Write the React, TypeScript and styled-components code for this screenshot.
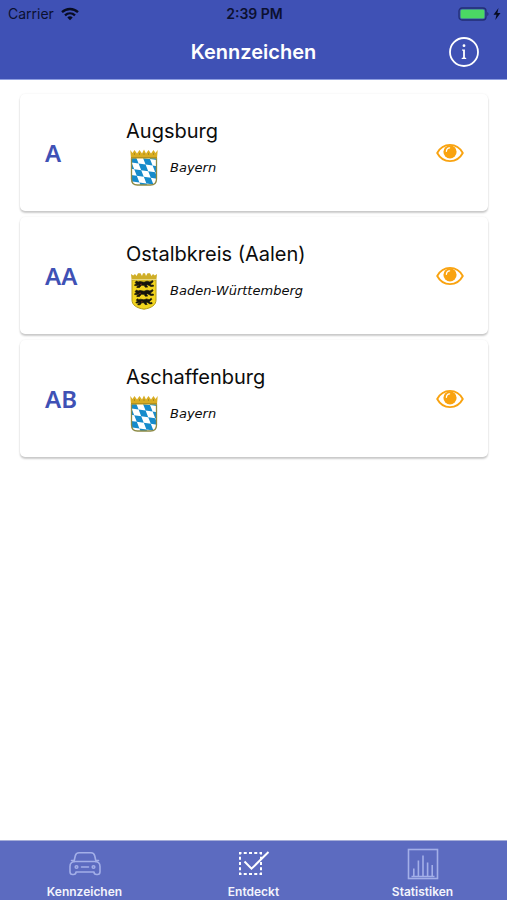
import React from "react";
import styled, { createGlobalStyle } from "styled-components";

const GlobalStyle = createGlobalStyle`
  * { box-sizing: border-box; }
  body {
    margin: 0;
    background: #fff;
    color: #0c0c0c;
    font-family: Inter, "Liberation Sans", sans-serif;
  }
  button { font: inherit; color: inherit; border: 0; padding: 0; background: none; cursor: pointer; }
`;

const Screen = styled.div`
  min-height: 100vh;
  display: flex;
  flex-direction: column;
`;

const Header = styled.header`
  background: #3f51b5;
  border-bottom: 1px solid #8f9ee0;
`;

const StatusBar = styled.div`
  display: grid;
  grid-template-columns: 1fr auto 1fr;
  align-items: center;
  height: 27px;
  padding: 0 6px 0 8px;
  color: #0b1030;
  font-size: 14px;
`;

const StatusGroup = styled.div<{ $end?: boolean }>`
  display: flex;
  align-items: center;
  gap: ${(p) => (p.$end ? 4 : 7)}px;
  justify-content: ${(p) => (p.$end ? "flex-end" : "flex-start")};
`;

const Clock = styled.time`
  font-weight: 600;
`;

const NavBar = styled.div`
  display: grid;
  grid-template-columns: 1fr auto 1fr;
  align-items: center;
  height: 52px;
  padding: 0 28px 2px;
  color: #fff;
`;

const Title = styled.h1`
  grid-column: 2;
  margin: 0;
  font-size: 20px;
  line-height: 24px;
  font-weight: 600;
`;

const InfoButton = styled.button`
  justify-self: end;
  display: flex;
`;

const List = styled.ul`
  flex: 1;
  display: flex;
  flex-direction: column;
  gap: 6px;
  margin: 0;
  padding: 14px 19px 14px 20px;
  list-style: none;
`;

const Card = styled.li`
  display: grid;
  grid-template-columns: 81px 1fr auto;
  align-items: center;
  height: 117px;
  padding: 0 24px 0 25px;
  border-radius: 5px;
  background: #fff;
  box-shadow: 0 2px 2px rgba(0, 0, 0, 0.2), 0 0 2px rgba(0, 0, 0, 0.08);
`;

const Plate = styled.strong`
  font-family: "Noto Sans", sans-serif;
  font-size: 24px;
  line-height: 32px;
  font-weight: 600;
  color: #3f51b5;
`;

const Place = styled.div`
  padding-top: 2px;
`;

const City = styled.h2`
  margin: 0;
  font-size: 20px;
  line-height: 28px;
  font-weight: 400;
`;

const Region = styled.div`
  display: flex;
  align-items: center;
  gap: 8px;
  height: 46px;
  font-family: "DejaVu Sans", sans-serif;
  font-size: 13px;
  font-style: italic;
`;

const SpotButton = styled.button`
  display: flex;
  color: #f9a310;
`;

const TabBar = styled.nav`
  display: grid;
  grid-template-columns: repeat(3, 1fr);
  height: 60px;
  background: #5c6bc0;
  border-top: 1px solid #a6aed8;
`;

const Tab = styled.a`
  display: flex;
  flex-direction: column;
  align-items: center;
  gap: 5px;
  padding-top: 7px;
  color: #f3f4fc;
  font-size: 12px;
  line-height: 14px;
  font-weight: 600;
  text-decoration: none;
`;

const TabIcon = styled.svg<{ $active?: boolean }>`
  display: block;
  flex: none;
  fill: none;
  stroke: ${(p) => (p.$active ? "#ffffff" : "#a3afe8")};
`;

const WifiIcon = () => (
  <svg width="18" height="14" viewBox="0 0 18 14" fill="none" stroke="#080c22" strokeWidth="2.3" aria-label="WLAN">
    <path d="M1 5.2C5.5.9 12.5.9 17 5.2" />
    <path d="M4 8.3c2.900-2.700 7.100-2.700 10 0" />
    <path d="M6.300 10.400c1.600-1.400 3.800-1.400 5.400 0L9 13.200z" fill="#080c22" stroke="none" />
  </svg>
);

const BatteryIcon = () => (
  <svg width="31" height="14" viewBox="0 0 31 14" aria-label="Akku">
    <rect x="1" y="1" width="27" height="12" rx="3" fill="none" stroke="#232e74" strokeWidth="1.3" />
    <rect x="2.5" y="2.5" width="24" height="9" rx="1.5" fill="#4bd864" />
    <path d="M29.300 5v4c1.600-.5 1.600-3.500 0-4z" fill="#232e74" />
  </svg>
);

const BoltIcon = () => (
  <svg width="8" height="12" viewBox="0 0 8 12" fill="#080c22" aria-label="Lädt">
    <path d="M5.500 0 .5 6.700h3L2.300 12l5.200-7H4.400z" />
  </svg>
);

const InfoIcon = () => (
  <svg width="30" height="30" viewBox="0 0 30 30" fill="#fff" aria-hidden="true">
    <circle cx="15" cy="15" r="14" fill="none" stroke="#fff" strokeWidth="1.8" />
    <circle cx="15" cy="8.7" r="1.4" />
    <path d="M13 12.400h2.900v8.200l1.300.4v.9h-4.500V21l1.400-.4v-6.900l-1.100-.3z" />
  </svg>
);

const EyeIcon = () => (
  <svg width="28" height="20" viewBox="0 0 28 20" fill="none" aria-hidden="true">
    <path d="M1.200 10C4 4.800 8.700 1.900 14 1.900S24 4.800 26.800 10C24 15.200 19.300 18.100 14 18.100S4 15.200 1.200 10z" stroke="currentColor" strokeWidth="1.9" strokeLinejoin="round" />
    <circle cx="14" cy="8.8" r="6.6" fill="currentColor" />
    <path d="M10.400 8.300c.1-2.100 1.300-3.400 3.200-3.500" stroke="#fff" strokeWidth="1.3" strokeLinecap="round" />
  </svg>
);

const lozenges: string[] = [];
for (let i = -6; i < 8; i++) {
  for (let j = -6; j < 8; j++) {
    if ((i + j) % 2 === 0) {
      lozenges.push(`M${3 + i * 7 + j * 2.6} ${7 + i * 1 + j * 6.6}l7 1 2.600 6.600-7-1z`);
    }
  }
}

const BavariaArms = () => (
  <svg width="36" height="38" viewBox="0 0 36 38" role="img" aria-label="Wappen Bayern">
    <defs>
      <clipPath id="bavaria-shield">
        <path d="M5.500 9h25v21c0 4-2 6-6 6h-13c-4 0-6-2-6-6z" />
      </clipPath>
    </defs>
    <path d="M5.500 9h25v21c0 4-2 6-6 6h-13c-4 0-6-2-6-6z" fill="#fff" />
    <path d={lozenges.join("")} fill="#168bcb" clipPath="url(#bavaria-shield)" />
    <path d="M5.500 9v21c0 4 2 6 6 6h13c4 0 6-2 6-6V9" fill="none" stroke="#8d8a45" strokeWidth="1.3" />
    <path d="M4.300 1 6.500 4l2-3 2.500 3.500L13.500 1 16 4.500 18 .5l2 4L22.500 1 25 4.500 27.500 1l2 3 2.200-3L31 9.500H5z" fill="#d9ad22" />
    <path d="M5 8.600h26M8.500 4v2m5-2v2m4.500-2v2m4.500-2v2m5-2v2" stroke="#a98a20" strokeWidth=".9" fill="none" />
  </svg>
);

const lionPath =
  "M9 3.500 10.500 2 12 3 14 2.500l4 .7 3-1 3 .8 2.500-1.400.6 1.200-2 1.600-1.200.6 1.800 1.200 1.600-.2.200 1.200-2.600.3-3.200-1.700-1.200.7 1.200 1.600-2.400.1-1.200-1.900-2.800-.1-1.700 2.200-2.800.1.300-1.100 1.400-.3.500-1.400-2 .9-2.400-.1.300-1.100 1.500-.2-.5-1.300z";

const BadenArms = () => (
  <svg width="36" height="38" viewBox="0 0 36 38" role="img" aria-label="Wappen Baden-Württemberg">
    <path d="M6 8h24v20c0 5-4.500 8-12 9.200C10.500 36 6 33 6 28z" fill="#f3d51e" stroke="#b39c1a" strokeWidth="1" />
    <path d="M5 2 7.200 3.500 9 2l1.500 2L12 1.200h2.500L16 4l1-2.800h2L20 4l1.500-2.800H24L25.500 4 27 2l1.800 1.500L31 2l-.6 6H5.600z" fill="#cfae27" />
    <path d="M6 7.600h24" stroke="#eee6a2" strokeWidth=".8" />
    <g fill="#15140c" stroke="#15140c" strokeWidth=".7" strokeLinejoin="round">
      <path d={lionPath} transform="translate(0 7)" />
      <path d={lionPath} transform="translate(0 16)" />
      <path d={lionPath} transform="translate(2.5 24.8) scale(.86 .95)" />
    </g>
    <path d="M14 12.500l2-.4m-3 9.400 2-.4m0 8.900 1.500-.4" stroke="#9e2c1c" strokeWidth=".7" />
  </svg>
);

const CarIcon = () => (
  <TabIcon width="32" height="32" viewBox="0 0 32 32" strokeWidth="1.6" strokeLinejoin="round" strokeLinecap="round" aria-hidden="true">
    <path d="M5 13.500 6.300 7.800C6.800 5.700 8 4.800 10 4.800h12c2 0 3.200.9 3.700 3L27 13.500" />
    <path d="M6.500 13.500h19c3.500 0 5.500 2 5.500 5v5.300c0 1.800-1 2.700-2.600 2.700h-.8c-1.600 0-2.600-.9-2.600-2.500H7c0 1.600-1 2.500-2.600 2.500h-.8C2 26.500 1 25.600 1 23.800v-5.300c0-3 2-5 5.500-5z" />
    <path d="M2.500 12.500h2M27.500 12.500h2M12.500 19h7" />
    <circle cx="7.500" cy="19" r="1.3" />
    <circle cx="24.5" cy="19" r="1.3" />
  </TabIcon>
);

const CheckIcon = () => (
  <TabIcon $active width="32" height="32" viewBox="0 0 32 32" strokeWidth="2" aria-hidden="true">
    <path d="M2 5h21v21H2z" strokeDasharray="3 2.25" strokeDashoffset="1.5" />
    <path d="m6.500 13.500 7 7.200L30.500 4" />
  </TabIcon>
);

const ChartIcon = () => (
  <TabIcon width="32" height="32" viewBox="0 0 32 32" strokeWidth="1.6" aria-hidden="true">
    <rect x="1.5" y="1.5" width="29" height="29" />
    <path d="M4.500 28.500h23M6.800 28.500v-8M11.400 28.500V12.500M16 28.500V7.500M20.600 28.500V14.500M25.200 28.500V17" />
  </TabIcon>
);

const places = [
  { plate: "A", city: "Augsburg", region: "Bayern", Arms: BavariaArms },
  { plate: "AA", city: "Ostalbkreis (Aalen)", region: "Baden-Württemberg", Arms: BadenArms },
  { plate: "AB", city: "Aschaffenburg", region: "Bayern", Arms: BavariaArms },
];

const tabs = [
  { label: "Kennzeichen", Icon: CarIcon },
  { label: "Entdeckt", Icon: CheckIcon, active: true },
  { label: "Statistiken", Icon: ChartIcon },
];

export default function App() {
  return (
    <Screen>
      <GlobalStyle />
      <Header>
        <StatusBar>
          <StatusGroup>
            Carrier
            <WifiIcon />
          </StatusGroup>
          <Clock>2:39 PM</Clock>
          <StatusGroup $end>
            <BatteryIcon />
            <BoltIcon />
          </StatusGroup>
        </StatusBar>
        <NavBar>
          <Title>Kennzeichen</Title>
          <InfoButton type="button" aria-label="Info">
            <InfoIcon />
          </InfoButton>
        </NavBar>
      </Header>
      <List>
        {places.map(({ plate, city, region, Arms }) => (
          <Card key={plate}>
            <Plate>{plate}</Plate>
            <Place>
              <City>{city}</City>
              <Region>
                <Arms />
                {region}
              </Region>
            </Place>
            <SpotButton type="button" aria-label={`${city} entdeckt`}>
              <EyeIcon />
            </SpotButton>
          </Card>
        ))}
      </List>
      <TabBar>
        {tabs.map(({ label, Icon, active }) => (
          <Tab key={label} href="#" aria-current={active ? "page" : undefined}>
            <Icon />
            {label}
          </Tab>
        ))}
      </TabBar>
    </Screen>
  );
}
